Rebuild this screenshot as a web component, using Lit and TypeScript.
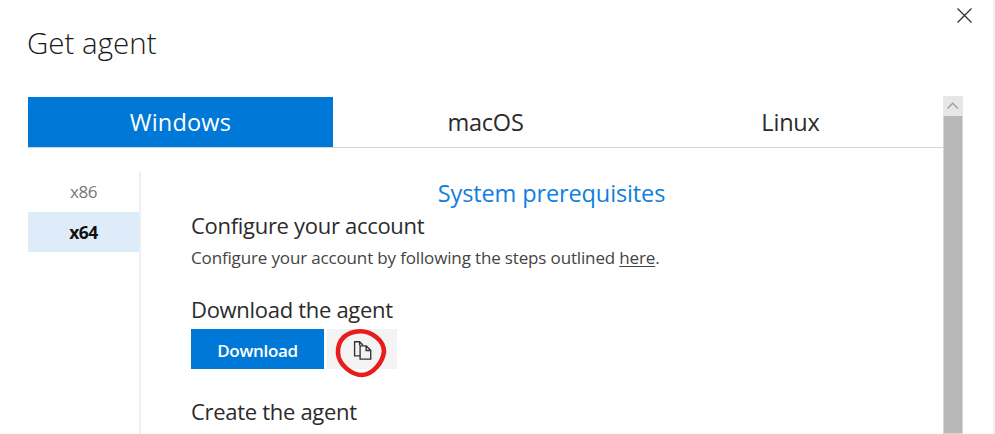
import { LitElement, html, css, svg } from "lit";
import { customElement, state } from "lit/decorators.js";

@customElement("copy-icon")
class CopyIcon extends LitElement {
  static styles = css`
    :host { display: block; width: 20px; height: 20px; }
    svg { display: block; }
    path { fill: none; stroke: #333; stroke-width: 1.35; }
  `;
  render() {
    return html`<svg width="20" height="20" viewBox="0 0 20 20">
      ${svg`<path d="M7 15.9H1.6V1.7H6.6L9.9 5M6.6 1.7V5.5"/>
      <path d="M7.1 5.9H13.3L17.7 10.3V19.1H7.1ZM13.1 5.9V10.5H17.7"/>`}
    </svg>`;
  }
}

@customElement("app-root")
class AppRoot extends LitElement {
  @state() tab = "Windows";
  @state() arch = "x64";

  static styles = css`
    :host {
      display: block;
      box-sizing: border-box;
      width: 995px;
      height: 434px;
      overflow: hidden;
      background: #fff;
      border-right: 2px solid #f0f0f0;
      color: #2b2b2b;
      font-family: "Open Sans", "Noto Sans", sans-serif;
      white-space: nowrap;
    }
    .head { display: flex; justify-content: space-between; height: 96px; padding: 0 20px 0 27px; }
    .title { margin: 23px 0 0; height: 40px; font-size: 29.5px; line-height: 40px; font-weight: 300; color: #1a1a1a; }
    .close { width: 17px; height: 17px; margin-top: 7px; }
    .body { display: flex; height: 338px; padding-left: 28px; }
    .main { width: 915px; }
    .tabs { display: flex; height: 50px; border-top: 1px solid #fff; border-bottom: 1px solid #d4d4d4; }
    .tab { flex: 1; text-align: center; font-size: 23.5px; line-height: 50px; letter-spacing: -0.2px; }
    .tab.on { background: #0078d7; color: #fff; letter-spacing: 0.2px; }
    .cols { display: flex; padding-top: 24px; }
    .side { width: 111px; height: 290px; border-right: 2px solid #efefef; }
    .arch { height: 40px; line-height: 40px; font-size: 17px; text-align: center; color: #767676; letter-spacing: -0.5px; }
    .arch.on { background: #deecf9; color: #111; font-weight: 700; font-size: 17.5px; line-height: 41px; }
    .panel { flex: 1; padding-left: 50px; }
    .link { height: 37px; line-height: 43px; width: 721px; text-align: center; font-size: 23.5px; letter-spacing: -0.12px; color: #0f80da; }
    .h { font-size: 22px; line-height: 32px; height: 32px; font-weight: 400; margin: 0; letter-spacing: -0.3px; }
    .p { font-size: 17px; line-height: 34px; height: 32px; margin: 0 0 20px; color: #444; letter-spacing: -0.15px; }
    .p u { text-underline-offset: 2px; text-decoration-thickness: 1px; }
    .row { display: flex; gap: 3px; margin: 4px 0 26px; }
    .dl { width: 133px; height: 40px; background: #0078d7; color: #fff; font-weight: 600; font-size: 17px; line-height: 43px; text-align: center; letter-spacing: -0.3px; }
    .copy { position: relative; width: 70px; height: 40px; background: #f3f3f3; }
    .copy copy-icon { margin: 11px 0 0 26px; }
    .ring { position: absolute; left: 6px; top: -2.5px; }
    .bar { width: 20px; background: #b8b8b8; box-sizing: border-box; border: 1px solid #d6d6d6; border-top: 0; }
    .up { display: block; width: 20px; height: 20px; margin-left: -1px; background: #e6e6e6; }
  `;

  render() {
    return html`
      <div class="head">
        <h1 class="title">Get agent</h1>
        <svg class="close" viewBox="0 0 17 17"><path d="M1.5 1.5L15.5 15.5M15.5 1.5L1.5 15.5" fill="none" stroke="#333" stroke-width="1.3"/></svg>
      </div>
      <div class="body">
        <div class="main">
          <div class="tabs">
            ${["Windows", "macOS", "Linux"].map(t => html`
              <div class="tab ${t === this.tab ? "on" : ""}" @click=${() => (this.tab = t)}>${t}</div>`)}
          </div>
          <div class="cols">
            <div class="side">
              ${["x86", "x64"].map(a => html`
                <div class="arch ${a === this.arch ? "on" : ""}" @click=${() => (this.arch = a)}>${a}</div>`)}
            </div>
            <div class="panel">
              <div class="link">System prerequisites</div>
              <h2 class="h">Configure your account</h2>
              <p class="p">Configure your account by following the steps outlined <u>here</u>.</p>
              <h2 class="h">Download the agent</h2>
              <div class="row">
                <div class="dl">Download</div>
                <div class="copy">
                  <copy-icon></copy-icon>
                  <svg class="ring" width="56" height="54" viewBox="0 0 56 54">
                    <path d="M27 4.2C38 4 51 13 51 24.5C50 35 40 47.5 29 48C18 48 5.5 37 5 26C4.5 12 14 4.5 27 4.2Z" fill="none" stroke="#e81c1c" stroke-width="4.6"/>
                  </svg>
                </div>
              </div>
              <h2 class="h">Create the agent</h2>
            </div>
          </div>
        </div>
        <div class="bar">
          <svg class="up" viewBox="0 0 20 20"><path d="M4.5 12.5L9.7 7.3L14.9 12.5" fill="none" stroke="#a0a0a0" stroke-width="1.4"/></svg>
        </div>
      </div>
    `;
  }
}
